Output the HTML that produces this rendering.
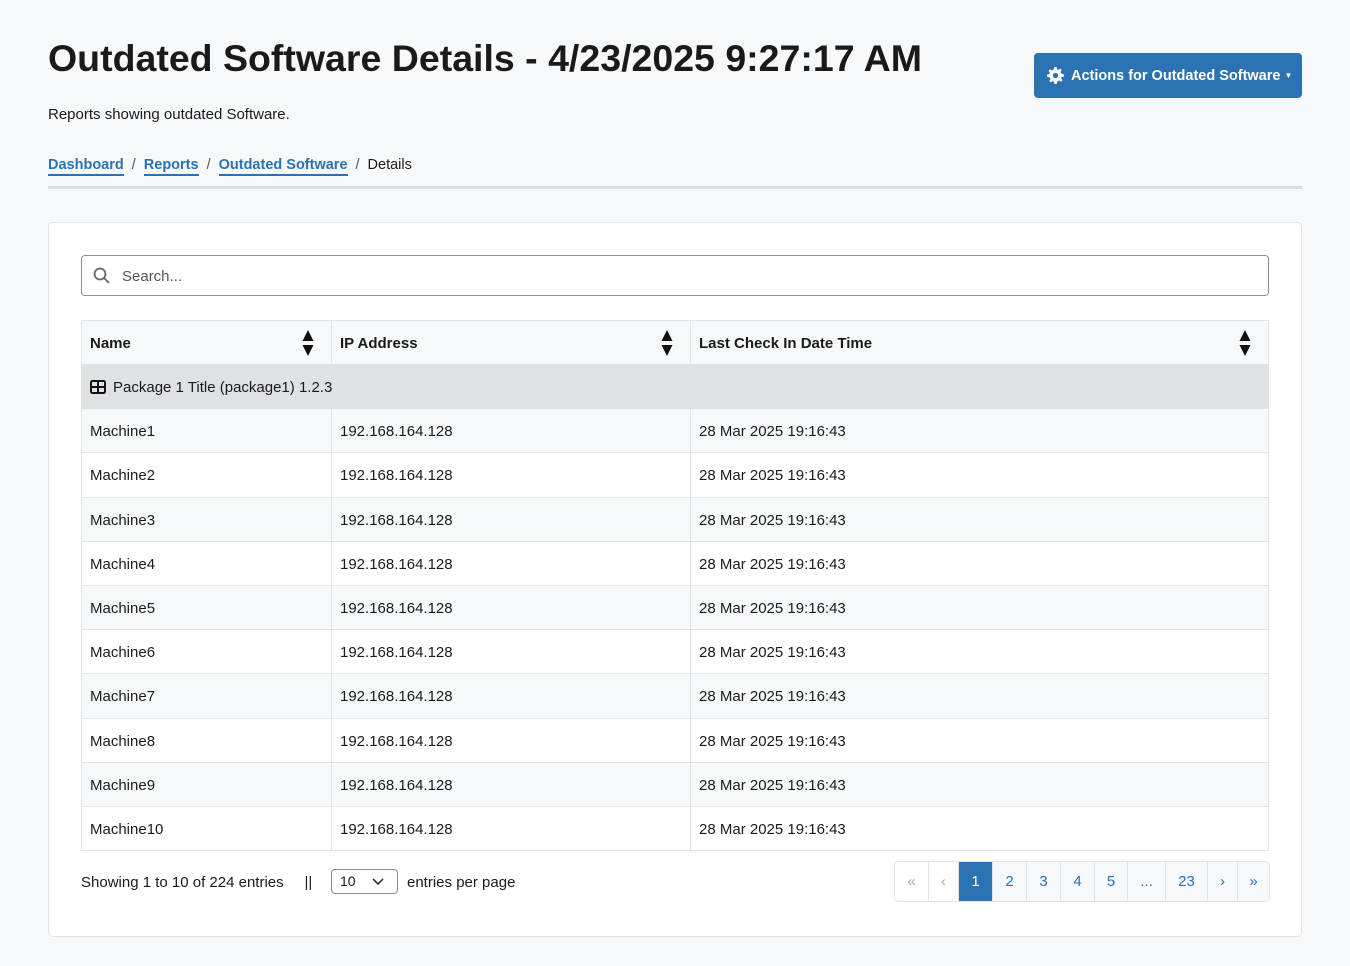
<!DOCTYPE html>
<html><head><style>
*{box-sizing:border-box;margin:0;padding:0}
body{width:1350px;height:966px;background:#f7f8fa;font-family:"Liberation Sans",sans-serif;color:#1a1a1a;position:relative;overflow:hidden}
h1{position:absolute;left:48px;top:37px;font-size:37.5px;font-weight:bold;white-space:nowrap}
.sub{position:absolute;left:48px;top:106px;font-size:15px}
.btn{position:absolute;left:1034px;top:53px;width:268px;height:45px;background:#2a72b2;border-radius:4px;color:#fff;font-weight:bold;font-size:14.5px;display:flex;align-items:center;padding-left:13px;gap:7px}
.crumb{position:absolute;left:48px;top:157px;font-size:14.5px;display:flex;gap:8px}
.crumb a{color:#2a72b2;font-weight:bold;text-decoration:none;border-bottom:2px solid #2a72b2;padding-bottom:1px}
.crumb span{color:#555}
.hr{position:absolute;left:48px;top:186px;width:1254px;height:3px;background:#dcdde0}
.card{position:absolute;left:48px;top:222px;width:1254px;height:715px;background:#fff;border:1px solid #e2e4e7;border-radius:5px}
.search{position:absolute;left:81px;top:255px;width:1188px;height:41px;border:1px solid #8a8d91;border-radius:4px;font-size:15px;color:#555;padding:12px 0 0 40px}
table{position:absolute;left:81px;top:320px;width:1188px;border-collapse:collapse;font-size:15px}
td,th{border:1px solid #e2e4e7;padding:2px 8px 0;height:44.2px;text-align:left}
th{height:44px;font-weight:bold;background:#f7f8fa;position:relative}
tr.g td{background:#dfe1e5;border-color:#dfe1e5}
tbody tr:nth-child(even) td{background:#f7f8fa}
.ar{position:absolute;right:16px;top:8px;width:14px;height:28px}
.foot{position:absolute;left:81px;top:874px;font-size:15px;white-space:nowrap}
.sel{position:absolute;left:331px;top:869px;width:67px;height:25px;border:1px solid #8a8d91;border-radius:4px;font-size:14px;padding:3px 0 0 8px}
.pg{position:absolute;left:894px;top:861px;height:41px;display:flex;border:1px solid #e2e4e7;border-radius:5px;overflow:hidden;font-size:15px}
.pg div{height:39px;display:flex;align-items:center;justify-content:center;border-left:1px solid #e2e4e7;color:#2a72b2;background:#f7f8fa}
.pg div:first-child{border-left:0}
</style></head><body>
<h1>Outdated Software Details - 4/23/2025 9:27:17 AM</h1>
<div class="btn"><svg width="17" height="17" viewBox="0 0 16 16"><path fill="#fff" d="M7 0h2l.4 2.1 1.3.6 1.8-1.2 1.4 1.4-1.2 1.8.6 1.3L16 7v2l-2.1.4-.6 1.3 1.2 1.8-1.4 1.4-1.8-1.2-1.3.6L9 16H7l-.4-2.1-1.3-.6-1.8 1.2-1.4-1.4 1.2-1.8-.6-1.3L0 9V7l2.1-.4.6-1.3-1.2-1.8 1.4-1.4 1.8 1.2 1.3-.6zM8 5.5a2.5 2.5 0 100 5 2.5 2.5 0 000-5z"/></svg>Actions for Outdated Software<span style="font-size:8px;margin-left:-3px">▼</span></div>
<div class="sub">Reports showing outdated Software.</div>
<div class="crumb"><a>Dashboard</a><span>/</span><a>Reports</a><span>/</span><a>Outdated Software</a><span>/</span><span style="color:#1a1a1a">Details</span></div>
<div class="hr"></div>
<div class="card"></div>
<div class="search"><svg style="position:absolute;left:11px;top:11px" width="17" height="17" viewBox="0 0 17 17"><circle cx="7" cy="7" r="5.5" stroke="#666" stroke-width="1.8" fill="none"/><path d="M11 11l5 5" stroke="#666" stroke-width="1.8"/></svg>Search...</div>
<table>
<thead><tr><th style="width:250px">Name<svg class="ar" viewBox="0 0 14 28"><path d="M7 1L12.5 12H1.5zM7 27L12.5 16H1.5z" fill="#111"/></svg></th><th style="width:359px">IP Address<svg class="ar" viewBox="0 0 14 28"><path d="M7 1L12.5 12H1.5zM7 27L12.5 16H1.5z" fill="#111"/></svg></th><th>Last Check In Date Time<svg class="ar" viewBox="0 0 14 28"><path d="M7 1L12.5 12H1.5zM7 27L12.5 16H1.5z" fill="#111"/></svg></th></tr></thead>
<tbody>
<tr class="g"><td colspan="3"><svg width="16" height="14" viewBox="0 0 16 14" style="vertical-align:-2px;margin-right:7px"><rect x="1" y="1" width="14" height="12" rx="1.5" fill="none" stroke="#111" stroke-width="2"/><path d="M8 1v12M1 7h14" stroke="#111" stroke-width="2"/></svg>Package 1 Title (package1) 1.2.3</td></tr>
<tr><td>Machine1</td><td>192.168.164.128</td><td>28 Mar 2025 19:16:43</td></tr>
<tr><td>Machine2</td><td>192.168.164.128</td><td>28 Mar 2025 19:16:43</td></tr>
<tr><td>Machine3</td><td>192.168.164.128</td><td>28 Mar 2025 19:16:43</td></tr>
<tr><td>Machine4</td><td>192.168.164.128</td><td>28 Mar 2025 19:16:43</td></tr>
<tr><td>Machine5</td><td>192.168.164.128</td><td>28 Mar 2025 19:16:43</td></tr>
<tr><td>Machine6</td><td>192.168.164.128</td><td>28 Mar 2025 19:16:43</td></tr>
<tr><td>Machine7</td><td>192.168.164.128</td><td>28 Mar 2025 19:16:43</td></tr>
<tr><td>Machine8</td><td>192.168.164.128</td><td>28 Mar 2025 19:16:43</td></tr>
<tr><td>Machine9</td><td>192.168.164.128</td><td>28 Mar 2025 19:16:43</td></tr>
<tr><td>Machine10</td><td>192.168.164.128</td><td>28 Mar 2025 19:16:43</td></tr>
</tbody></table>
<div class="foot">Showing 1 to 10 of 224 entries &nbsp;&nbsp;&nbsp; ||</div>
<div class="sel">10<svg style="position:absolute;right:13px;top:8px" width="12" height="8" viewBox="0 0 12 8"><path d="M1 1l5 5 5-5" stroke="#333" stroke-width="1.6" fill="none"/></svg></div>
<div class="foot" style="left:407px">entries per page</div>
<div class="pg">
<div style="width:33px;color:#aaa;background:#fff">«</div>
<div style="width:30px;color:#aaa;background:#fff">‹</div>
<div style="width:34px;background:#2a72b2;color:#fff">1</div>
<div style="width:34px">2</div><div style="width:34px">3</div><div style="width:34px">4</div><div style="width:33px">5</div>
<div style="width:38px">...</div><div style="width:42px">23</div>
<div style="width:30px">›</div><div style="width:32px">»</div>
</div>
</body></html>
